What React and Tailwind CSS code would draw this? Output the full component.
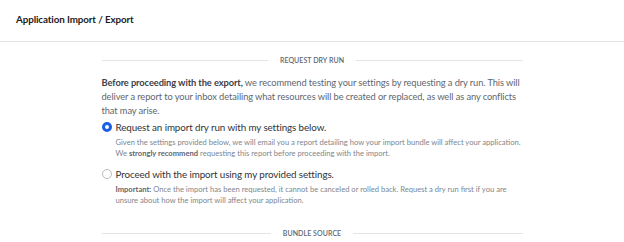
const SectionDivider = ({ label }) => (
  <div className="flex h-[10px] items-center gap-3">
    <div className="h-px flex-1 bg-[#e2e4e7]" />
    <span className="text-[7px] font-semibold uppercase leading-[10px] tracking-[0.01em] text-[#5f6670]">
      {label}
    </span>
    <div className="h-px flex-1 bg-[#e2e4e7]" />
  </div>
);

const RadioOption = ({ checked, label, children, className }) => (
  <div className={className}>
    <label className="flex items-center gap-[4px]">
      {checked ? (
        <span className="box-border h-[10px] w-[10px] shrink-0 rounded-full border-[3px] border-[#1a5fe6] bg-white" />
      ) : (
        <span className="box-border h-[10px] w-[10px] shrink-0 rounded-full border border-[#b9bdc3] bg-white" />
      )}
      <span className="text-[9.8px] leading-[14px] tracking-[-0.01em] text-[#2f3338]">{label}</span>
    </label>
    <p className="mt-[3px] pl-[14px] text-[7.6px] leading-[11px] text-[#80868e]">
      {children}
    </p>
  </div>
);

export default function App() {
  return (
    <div
      className="h-[242px] w-[624px] overflow-hidden bg-white"
      style={{ fontFamily: "Lato, 'Open Sans', sans-serif" }}
    >
      {/* Header */}
      <div className="flex h-[42px] items-center border-b border-[#e4e5e7] px-4 pb-[2px]">
        <h1 className="text-[9.8px] font-bold tracking-[-0.01em] text-[#1d2024]">
          Application Import / Export
        </h1>
      </div>

      {/* Main Content */}
      <div className="mx-auto w-[421px] pt-[13px]">
        <SectionDivider label="Request Dry Run" />

        <p className="mt-[11px] text-[9.3px] leading-[14px] tracking-[-0.01em] text-[#60666e]">
          <span className="font-bold text-[#3c4047]">Before proceeding with the export,</span>{" "}
          we recommend testing your settings by requesting a dry run. This will deliver a report to
          your inbox detailing what resources will be created or replaced, as well as any conflicts
          that may arise.
        </p>

        <RadioOption
          checked
          className="mt-[2px]"
          label="Request an import dry run with my settings below."
        >
          Given the settings provided below, we will email you a report detailing how your import
          bundle will affect your application. We{" "}
          <span className="font-bold text-[#5f656d]">strongly recommend</span> requesting this
          report before proceeding with the import.
        </RadioOption>

        <RadioOption
          className="mt-[8px]"
          label="Proceed with the import using my provided settings."
        >
          <span className="font-bold text-[#5f656d]">Important:</span> Once the import has been
          requested, it cannot be canceled or rolled back. Request a dry run first if you are
          unsure about how the import will affect your application.
        </RadioOption>

        <div className="mt-[22px]">
          <SectionDivider label="Bundle Source" />
        </div>
      </div>
    </div>
  );
}
